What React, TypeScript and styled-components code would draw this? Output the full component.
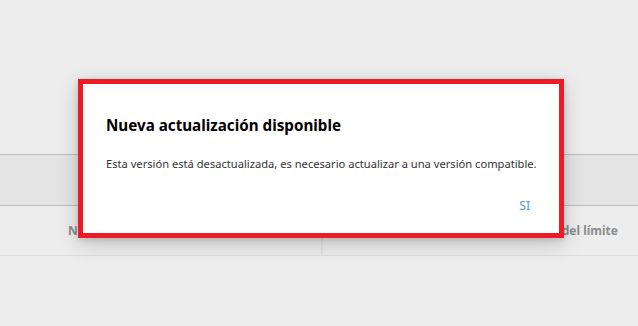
import React from 'react'
import styled, { createGlobalStyle } from 'styled-components'

const GlobalStyle = createGlobalStyle`
  html, body {
    margin: 0;
    padding: 0;
    background: #ededed;
    font-family: 'Noto Sans', 'Open Sans', sans-serif;
  }
`

const App = () => {
  return (
    <Page>
      <GlobalStyle />
      <TopArea />
      <Toolbar />
      <HeaderRow>
        <HeaderCell align="left">Nombre</HeaderCell>
        <HeaderCell align="right">Uso del límite</HeaderCell>
      </HeaderRow>
      <Dialog role="dialog">
        <Title>Nueva actualización disponible</Title>
        <Message>
          Esta versión está desactualizada, es necesario actualizar a una versión compatible.
        </Message>
        <Actions>
          <ActionButton>SI</ActionButton>
        </Actions>
      </Dialog>
    </Page>
  )
}

const Page = styled.div`
  position: relative;
  width: 638px;
  height: 326px;
  overflow: hidden;
  background: #ededed;
  display: flex;
  flex-direction: column;
`

const TopArea = styled.div`
  height: 154px;
  flex: none;
`

const Toolbar = styled.div`
  height: 50px;
  flex: none;
  background: #e4e4e4;
  border-top: 1px solid #bfbfbf;
  border-bottom: 1px solid #bfbfbf;
`

const HeaderRow = styled.div`
  height: 49px;
  flex: none;
  display: grid;
  grid-template-columns: 321px 1fr;
  border-bottom: 1px solid #dedede;
`

const HeaderCell = styled.div<{ align: 'left' | 'right' }>`
  display: flex;
  align-items: center;
  justify-content: ${({ align }) => (align === 'left' ? 'flex-start' : 'flex-end')};
  padding: ${({ align }) => (align === 'left' ? '0 0 0 68px' : '0 20px 0 0')};
  font-size: 12px;
  font-weight: 700;
  color: #8c8c8c;
  white-space: nowrap;
  overflow: hidden;
  & + & {
    border-left: 2px solid #e2e2e2;
  }
`

const Dialog = styled.div`
  position: absolute;
  left: 78px;
  top: 79px;
  width: 486px;
  height: 159px;
  box-sizing: border-box;
  background: #ffffff;
  border: 5px solid #ed1c24;
  box-shadow: 0 6px 20px rgba(0, 0, 0, 0.18), 0 2px 6px rgba(0, 0, 0, 0.12);
  padding: 30px 23px 0 23px;
  display: flex;
  flex-direction: column;
`

const Title = styled.h2`
  margin: 0;
  font-size: 15.2px;
  line-height: 22px;
  font-weight: 700;
  color: #000000;
`

const Message = styled.p`
  margin: 20px 0 0 0;
  font-size: 11.15px;
  line-height: 16px;
  color: #333333;
  white-space: nowrap;
`

const Actions = styled.div`
  display: flex;
  justify-content: flex-end;
  margin-top: 23px;
`

const ActionButton = styled.button`
  background: transparent;
  border: none;
  padding: 2px 6px;
  font-family: inherit;
  font-size: 12px;
  color: #3b9cf0;
  cursor: pointer;
`

export default App
